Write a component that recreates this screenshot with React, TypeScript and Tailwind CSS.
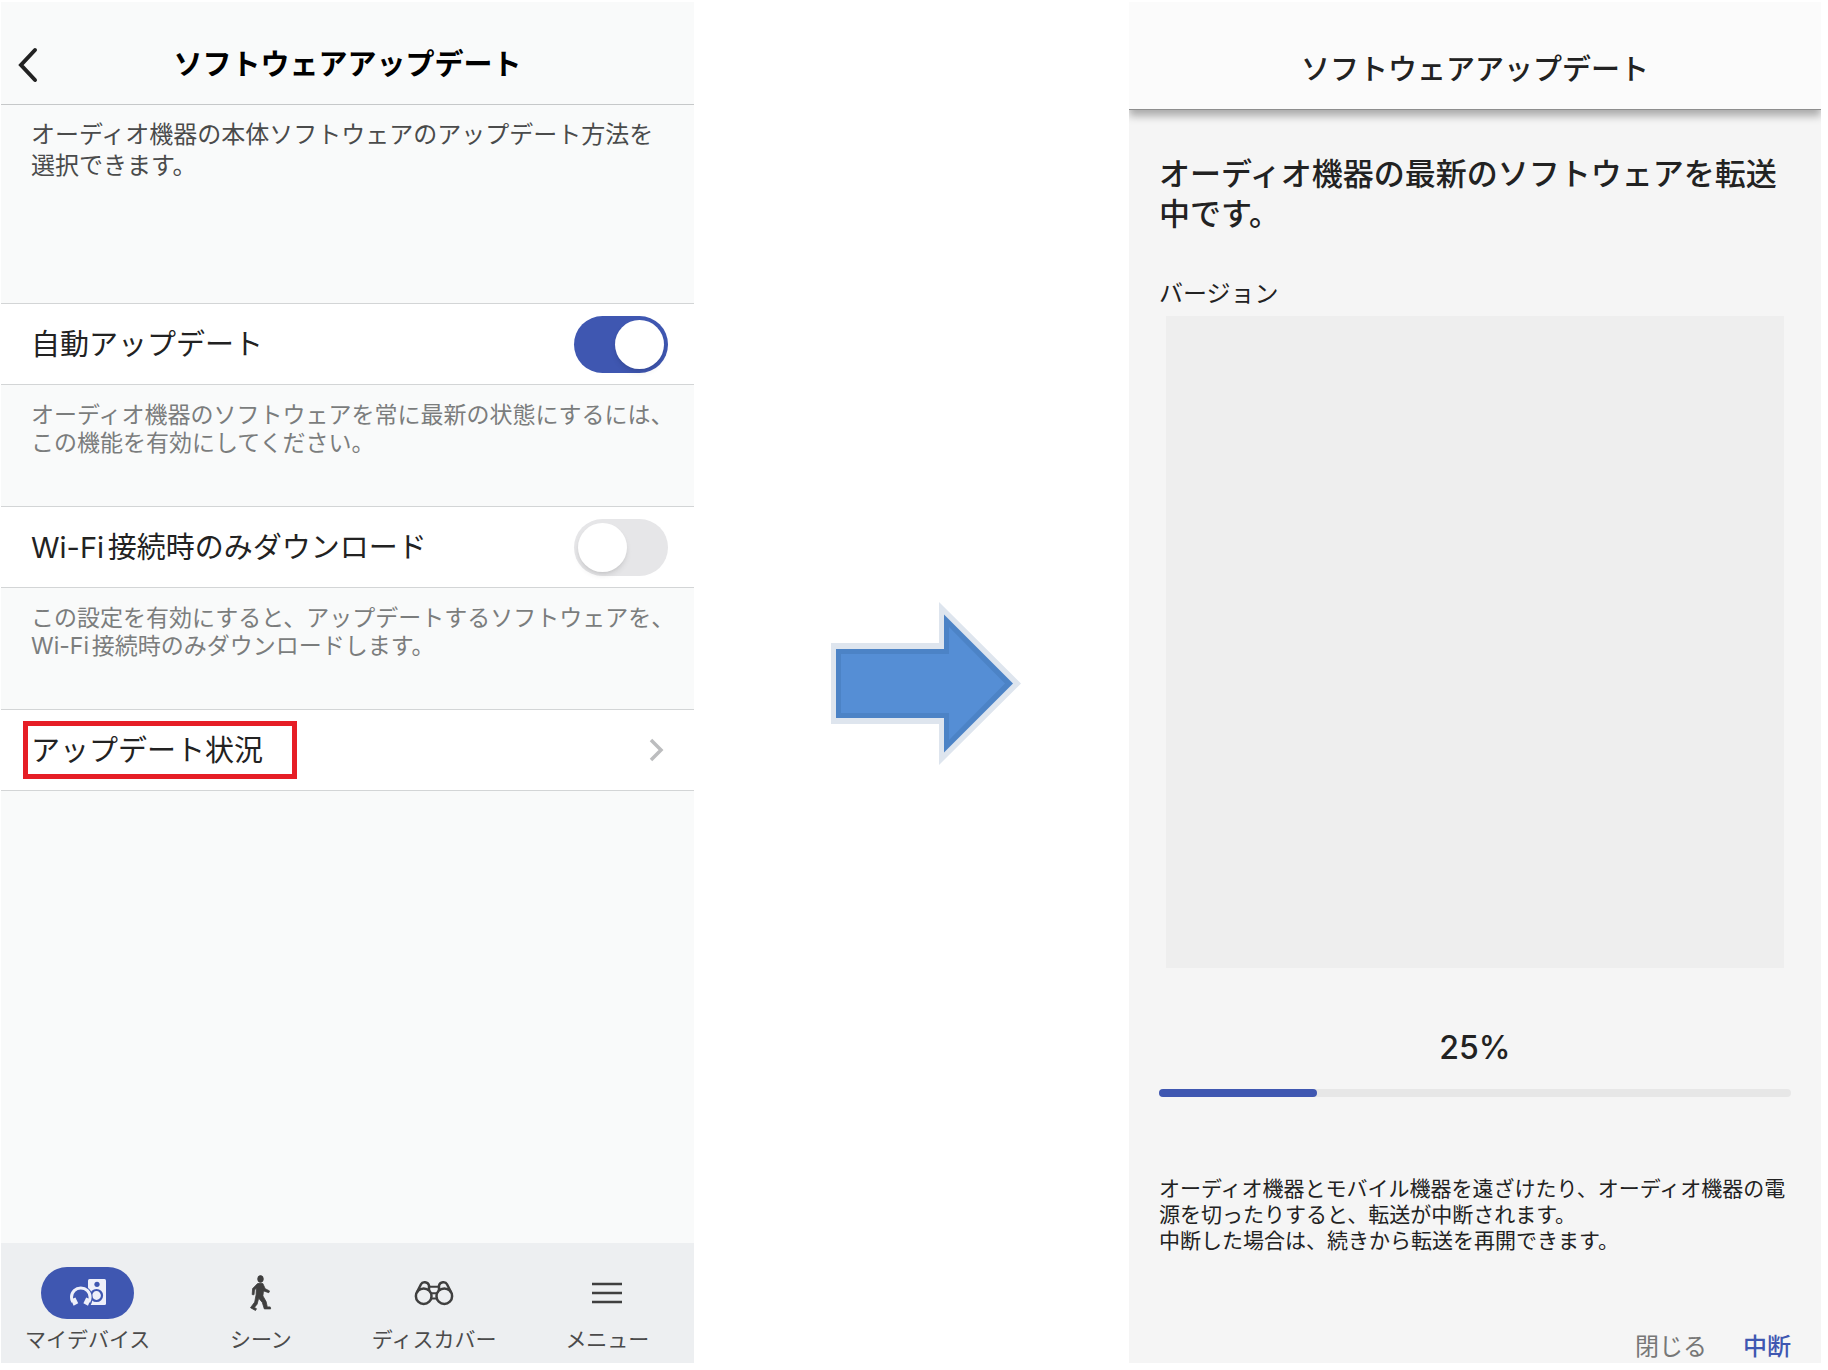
import { useState } from "react";

interface SettingToggle {
  id: string;
  label: string;
  help: string;
  enabled: boolean;
}

const settings: SettingToggle[] = [
  {
    id: "auto-update",
    label: "自動アップデート",
    help: "オーディオ機器のソフトウェアを常に最新の状態にするには、この機能を有効にしてください。",
    enabled: true,
  },
  {
    id: "wifi-only",
    label: "Wi-Fi接続時のみダウンロード",
    help: "この設定を有効にすると、アップデートするソフトウェアを、Wi-Fi接続時のみダウンロードします。",
    enabled: false,
  },
];

const progress = 25;

function DeviceIcon() {
  return (
    <svg viewBox="0 0 38 30" className="h-[30px] w-[38px]" fill="none">
      <rect x="19" y="1" width="18" height="26" rx="1.5" fill="#eef0fa" />
      <circle cx="28" cy="6.300" r="2.600" fill="#3f57b1" />
      <circle cx="27.500" cy="17.500" r="5.500" stroke="#3f57b1" strokeWidth="2.200" />
      {/* gap around the headphones */}
      <path d="M11.800 7.500C5 7.500 0 13 0 19.500c0 4 1.500 8 4 10h15.600c2.500-2 4-6 4-10 0-6.500-5-12-11.800-12Z" fill="#3f57b1" />
      <path d="M3.800 24C2.800 22.300 2.500 21 2.500 19.200c0-5.400 4.100-9.200 9.300-9.200s9.300 3.800 9.300 9.200c0 1.800-.3 3.100-1.300 4.800" stroke="#eef0fa" strokeWidth="3" />
      <path d="m2 21.600 4.400-2.200 2.800 5.800-4.600 2.600zM21.600 21.600l-4.400-2.200-2.800 5.800 4.600 2.600z" fill="#eef0fa" />
    </svg>
  );
}

function WalkIcon() {
  return (
    <svg
      viewBox="0 0 22 36"
      className="h-9 w-[22px]"
      fill="#3f3f3f"
      stroke="#3f3f3f"
      strokeWidth="0.800"
      strokeLinejoin="round"
    >
      <ellipse cx="10.500" cy="4" rx="2.800" ry="3.400" />
      <path d="M7.600 8.500h5.200l2.400 5.200 4.300 2.200-.7 1.800-5.300-1.800-.6 5 3.200 5.700 1.200 5.300h2.900l.5 2h-6.400l-2-6.500-3.600-4.200-1.600 6-2.700 3.200 2.100 1.300-1 1.800-5-2.800 4.200-5.600 1.400-7.400.2-6.500-1.800 1.800-.5 4.800-1.800-.2.400-6z" />
    </svg>
  );
}

function BinocularsIcon() {
  return (
    <svg viewBox="0 0 40 26" className="h-[26px] w-10" fill="none" stroke="#3f3f3f" strokeWidth="2.500">
      <circle cx="9.700" cy="16.200" r="7.800" />
      <circle cx="30.300" cy="16.200" r="7.800" />
      <path d="M2.800 12.500 7 4.200C8.400 1.400 14 1.600 15 5.500v5.500M37.200 12.500 33 4.200C31.600 1.400 26 1.600 25 5.500v5.500" />
      <path d="M15 6.800h10M17 13.200h6M17 18.600h6" strokeWidth="2" />
    </svg>
  );
}

function MenuIcon() {
  return (
    <svg viewBox="0 0 30 22" className="h-[22px] w-[30px]" stroke="#3f3f3f" strokeWidth="2.500">
      <path d="M0 2h30M0 11h30M0 20h30" />
    </svg>
  );
}

const tabs = [
  { label: "マイデバイス", icon: <DeviceIcon />, active: true },
  { label: "シーン", icon: <WalkIcon />, active: false },
  { label: "ディスカバー", icon: <BinocularsIcon />, active: false },
  { label: "メニュー", icon: <MenuIcon />, active: false },
];

function ToggleRow({ setting }: { setting: SettingToggle }) {
  const [on, setOn] = useState(setting.enabled);

  return (
    <>
      <div className="flex h-[82px] items-center justify-between border-y border-[#d3d5d6] bg-white pl-[30px] pr-[26px]">
        <label htmlFor={setting.id} className="pt-[2px] text-[29px] leading-10 text-[#222222]">
          {setting.label}
        </label>
        <input
          id={setting.id}
          type="checkbox"
          role="switch"
          checked={on}
          onChange={(e) => setOn(e.target.checked)}
          className="h-[57px] w-[94px] shrink-0 appearance-none rounded-full bg-[#e6e6e8] p-1 before:block before:h-[49px] before:w-[49px] before:rounded-full before:bg-white before:shadow-md checked:bg-[#3f57b1] checked:before:ml-[37px]"
        />
      </div>
      <p className="h-[121px] pl-[30px] pr-4 pt-4 text-[23px] leading-7 text-[#7b7d7d]">
        {setting.help}
      </p>
    </>
  );
}

export default function App() {
  return (
    <div className="grid min-h-screen grid-cols-[694fr_435fr_692fr] bg-white pb-[7px] pr-[7px] pt-[2px] font-[Inter,'Noto_Sans_CJK_JP',sans-serif] [text-autospace:normal]">
      {/* ===== SETTINGS SCREEN ===== */}
      <section className="ml-px flex flex-col bg-[#f9fafa]">
        <header className="grid h-[103px] grid-cols-[64px_1fr_64px] items-center border-b border-[#c6c8c9] pt-6">
          <button type="button" aria-label="戻る" className="pl-4">
            <svg viewBox="0 0 24 36" className="h-9 w-6" fill="none" stroke="#222222" strokeWidth="4" strokeLinecap="round">
              <path d="M18 3 4 18l14 15" />
            </svg>
          </button>
          <h1 className="text-center text-[29px] font-bold leading-10 text-black">
            ソフトウェアアップデート
          </h1>
        </header>

        <p className="h-[198px] pl-[30px] pr-8 pt-[14px] text-[24px] leading-[31px] text-[#4a4b4b]">
          オーディオ機器の本体ソフトウェアのアップデート方法を選択できます。
        </p>

        {settings.map((setting) => (
          <ToggleRow key={setting.id} setting={setting} />
        ))}

        <a
          href="#status"
          className="flex h-[82px] items-center justify-between border-y border-[#d3d5d6] bg-white pl-[22px] pr-[29px]"
        >
          <span className="flex h-[58px] w-[274px] items-center border-5 border-[#e61e26] pl-[3px] pt-[2px] text-[29px] leading-10 text-[#222222]">
            アップデート状況
          </span>
          <svg viewBox="0 0 16 24" className="h-6 w-4" fill="none" stroke="#bcbdbf" strokeWidth="3.500">
            <path d="m2 2 10 10L2 22" />
          </svg>
        </a>

        <nav className="mt-auto grid h-[120px] grid-cols-4 bg-[#edeff1] pt-6">
          {tabs.map((tab) => (
            <a
              key={tab.label}
              href="#tab"
              className="flex flex-col items-center gap-[3px] text-[21px] leading-9 text-[#4b4b4b]"
            >
              <span
                className={`flex h-[52px] w-[93px] items-center justify-center rounded-full ${tab.active ? "bg-[#3f57b1]" : ""}`}
              >
                {tab.icon}
              </span>
              {tab.label}
            </a>
          ))}
        </nav>
      </section>

      {/* Arrow between the two screens */}
      <div className="flex items-center justify-center pl-7 pt-[2px]">
        <svg viewBox="0 0 190 163" className="h-[163px] w-[190px]">
          <path d="M0 41h108V0l82 81.500-82 81.500v-41H0z" fill="#dee5ee" />
          <path d="M5 47h108V12.500l69 69-69 69V116H5z" fill="#4c83c6" />
          <path d="M10 52h108V25l56 56.500-56 56.500v-27H10z" fill="#558ed5" />
        </svg>
      </div>

      {/* ===== TRANSFER SCREEN ===== */}
      <section className="flex flex-col overflow-hidden bg-[#f5f5f5] text-[#222222]">
        <header className="flex h-[108px] items-center justify-center border-b border-[#8e8e8e] bg-[#fbfbfb] pt-7 shadow-[0_6px_8px_rgba(0,0,0,0.3)]">
          <h2 className="text-[29px] font-medium leading-10">ソフトウェアアップデート</h2>
        </header>

        <div className="flex flex-1 flex-col px-[30px]">
          <h3 className="mt-11 text-[31px] font-medium leading-10">
            オーディオ機器の最新のソフトウェアを転送中です。
          </h3>
          <p className="mt-[42px] text-[24px] leading-9">バージョン</p>
          <div className="mx-[7px] mt-1 h-[652px] bg-[#eeeeee]" />

          <p className="mt-[60px] text-center text-[32px] font-medium leading-10">{progress}%</p>
          <div
            role="progressbar"
            aria-label="転送の進行状況"
            aria-valuenow={progress}
            aria-valuemin={0}
            aria-valuemax={100}
            className="mt-[21px] h-2 rounded-full bg-[#e7e7e7]"
          >
            <div className="h-full rounded-full bg-[#3f57b1]" style={{ width: `${progress}%` }} />
          </div>

          <p className="mt-[79px] text-[21px] leading-[26px]">
            オーディオ機器とモバイル機器を遠ざけたり、オーディオ機器の電源を切ったりすると、転送が中断されます。
            <br />
            中断した場合は、続きから転送を再開できます。
          </p>

          <div className="mt-auto flex justify-end gap-9 text-[24px] leading-8">
            <button type="button" className="text-[#777777]">閉じる</button>
            <button type="button" className="font-medium text-[#3f57b1]">中断</button>
          </div>
        </div>
      </section>
    </div>
  );
}
